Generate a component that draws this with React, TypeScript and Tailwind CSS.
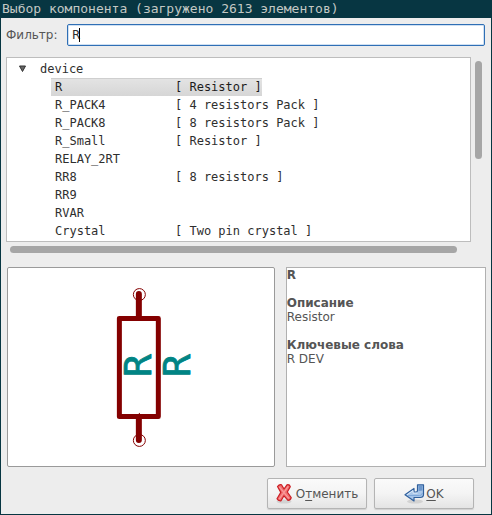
import React from "react";

type Part = { name: string; description?: string };

const parts: Part[] = [
  { name: "R", description: "[ Resistor ]" },
  { name: "R_PACK4", description: "[ 4 resistors Pack ]" },
  { name: "R_PACK8", description: "[ 8 resistors Pack ]" },
  { name: "R_Small", description: "[ Resistor ]" },
  { name: "RELAY_2RT" },
  { name: "RR8", description: "[ 8 resistors ]" },
  { name: "RR9" },
  { name: "RVAR" },
  { name: "Crystal", description: "[ Two pin crystal ]" },
];

function PartTree() {
  return (
    <ul
      role="tree"
      aria-label="device"
      className="min-w-0 flex-1 overflow-hidden border border-[#bdbdbd] bg-white py-px pt-0.5 font-['DejaVu_Sans_Mono',monospace] text-[12px] leading-[18px] whitespace-pre text-[#2e2e2e]"
    >
      <li role="treeitem" aria-expanded="true" aria-selected="false">
        <div className="flex items-center pl-3">
          <svg width="7" height="8" viewBox="0 0 7 8" className="mr-3.5">
            <path d="M0.5 1H6.5L3.5 6.5Z" fill="#666" stroke="#333" strokeLinejoin="round" />
          </svg>
          device
        </div>
        <ul role="group" className="flex flex-col items-start pl-11">
          {parts.map((part, i) => (
            <li
              key={part.name}
              role="treeitem"
              aria-selected={i === 0}
              className={
                i === 0
                  ? "flex h-[18px] bg-linear-to-b from-[#e4e4e4] to-[#d6d6d6] pl-1 text-[#1c1c1c] shadow-[inset_0_1px_0_#cfcfcf]"
                  : "flex h-[18px] pl-1"
              }
            >
              <span className="w-[120px]">{part.name}</span>
              <span>{part.description}</span>
            </li>
          ))}
        </ul>
      </li>
    </ul>
  );
}

function SymbolPreview() {
  return (
    <div className="flex min-w-0 flex-[268] items-center justify-center rounded-xs border border-[#9a9a9a] bg-white">
      <svg width="266" height="196" viewBox="8 269 266 196" role="img" aria-label="R">
        <g fill="none" stroke="#840000">
          <circle cx="139.5" cy="294.5" r="6" />
          <circle cx="139.5" cy="440.5" r="6" />
          <rect x="119.5" y="318.5" width="39" height="98" strokeWidth="5" strokeLinejoin="round" />
          <path d="M139 294V318M139 417V440" strokeWidth="6" strokeLinecap="round" strokeLinejoin="round" />
          <path d="M139.5 413V415" />
        </g>
        <g
          fill="#008484"
          stroke="#008484"
          strokeWidth="0.8"
          strokeLinejoin="round"
          fontSize="38"
          className="font-['Liberation_Sans_Narrow','DejaVu_Sans_Mono',monospace]"
        >
          <text transform="translate(151 377) rotate(-90)">R</text>
          <text transform="translate(190 377) rotate(-90)">R</text>
        </g>
      </svg>
    </div>
  );
}

function CancelIcon() {
  return (
    <svg width="16" height="20" viewBox="0 0 16 20">
      <ellipse cx="8" cy="17.5" rx="7.5" ry="2" fill="#d2d2d2" />
      <path
        d="M1.5 2.5Q3.5 0 5.5 0.8L8 5L11 0.8Q13.5 0.2 14.3 2.6L11.3 8L15.2 13.6Q14.8 16 12 16.4L8 11.8L5 16.8Q2 17 1 14.8L4.8 8.4Z"
        fill="#f07070"
        stroke="#cc1f25"
        strokeWidth="1.2"
        strokeLinejoin="round"
      />
      <path d="M3.3 2.8L12.8 14.4M12.2 2.4L7.5 9L3.3 15" fill="none" stroke="#fa9c9c" strokeWidth="1.2" />
    </svg>
  );
}

function OkIcon() {
  return (
    <svg width="21" height="20" viewBox="0 0 21 20">
      <ellipse cx="11" cy="17.5" rx="8" ry="2" fill="#d2d2d2" />
      <path
        d="M13.5 0.8H19.5V10.5Q19.5 13.5 16 13.5H10V17L1 10.8L10 4.5V8H12Q13.5 8 13.5 6.5Z"
        fill="#a9c7ea"
        stroke="#2f5f9c"
        strokeWidth="1.2"
        strokeLinejoin="round"
      />
      <path d="M14.5 2H18.5V6.5L14.5 7Z" fill="#6d97cc" />
      <path d="M3 10.8L9 6.6V9.2H13.5" fill="none" stroke="#dbe8f7" />
      <path d="M3.5 11.6H15.5Q18 11.6 18.4 9" fill="none" stroke="#7ba5d8" />
    </svg>
  );
}

function DialogButton({ children }: { children: React.ReactNode }) {
  return (
    <button
      type="button"
      className="flex h-[31px] w-[100px] items-center justify-center rounded-xs border border-[#b4b4b4] bg-linear-to-b from-[#fafafa] via-[#f4f4f4] to-[#e4e4e4] text-[12px] shadow-[0_1px_1px_#cfcfcf]"
    >
      {children}
    </button>
  );
}

export default function App() {
  return (
    <div className="flex min-h-screen flex-col border-x border-b border-[#073642] bg-[#ededed] font-['DejaVu_Sans',sans-serif] text-[12px] text-[#555]">
      <header className="h-[18px] overflow-hidden bg-[#073642] pl-px font-['DejaVu_Sans_Mono',monospace] text-[13px] leading-[18px] whitespace-nowrap text-[#c3c8c4]">
        <h1>Выбор компонента (загружено 2613 элементов)</h1>
      </header>

      <main className="flex flex-1 flex-col px-[5px] pt-1.5 pb-[5px]">
        <div className="flex items-center pr-px">
          <label htmlFor="filter" className="w-[61px] whitespace-nowrap">
            Фильтр:
          </label>
          <div className="relative min-w-0 flex-1">
            <input
              id="filter"
              type="text"
              defaultValue="R"
              className="block h-[22px] w-full rounded-xs border border-[#2f6fb5] bg-white pl-1 text-[12px] text-[#2e2e2e] shadow-[inset_0_0_0_1px_#cfe0f2] outline-none"
            />
            <span className="absolute top-1 left-3 h-3.5 w-px bg-black" />
          </div>
        </div>

        <div className="mt-[11px] flex">
          <PartTree />
          <div className="w-[15px] pt-1 pl-1">
            <div className="h-[98px] w-[7px] rounded-full bg-[#a6a6a6]" />
          </div>
        </div>
        <div className="mt-1 mr-[29px] ml-1 h-[7px] rounded-full bg-[#a6a6a6]" />

        <div className="mt-3.5 flex flex-1 gap-[11px] pl-px">
          <SymbolPreview />
          <section className="min-w-0 flex-[200] border border-[#b0b0b0] bg-white leading-[14px]">
            <h2 className="font-bold">R</h2>
            <h3 className="mt-3.5 font-bold">Описание</h3>
            <p>Resistor</p>
            <h3 className="mt-3.5 font-bold">Ключевые слова</h3>
            <p>R DEV</p>
          </section>
        </div>

        <div className="mt-[11px] mr-3 flex justify-end gap-[7px]">
          <DialogButton>
            <CancelIcon />
            <span className="ml-1">
              О<u className="underline-offset-2">т</u>менить
            </span>
          </DialogButton>
          <DialogButton>
            <OkIcon />
            <span className="ml-px">
              <u className="underline-offset-2">O</u>K
            </span>
          </DialogButton>
        </div>
      </main>
    </div>
  );
}
